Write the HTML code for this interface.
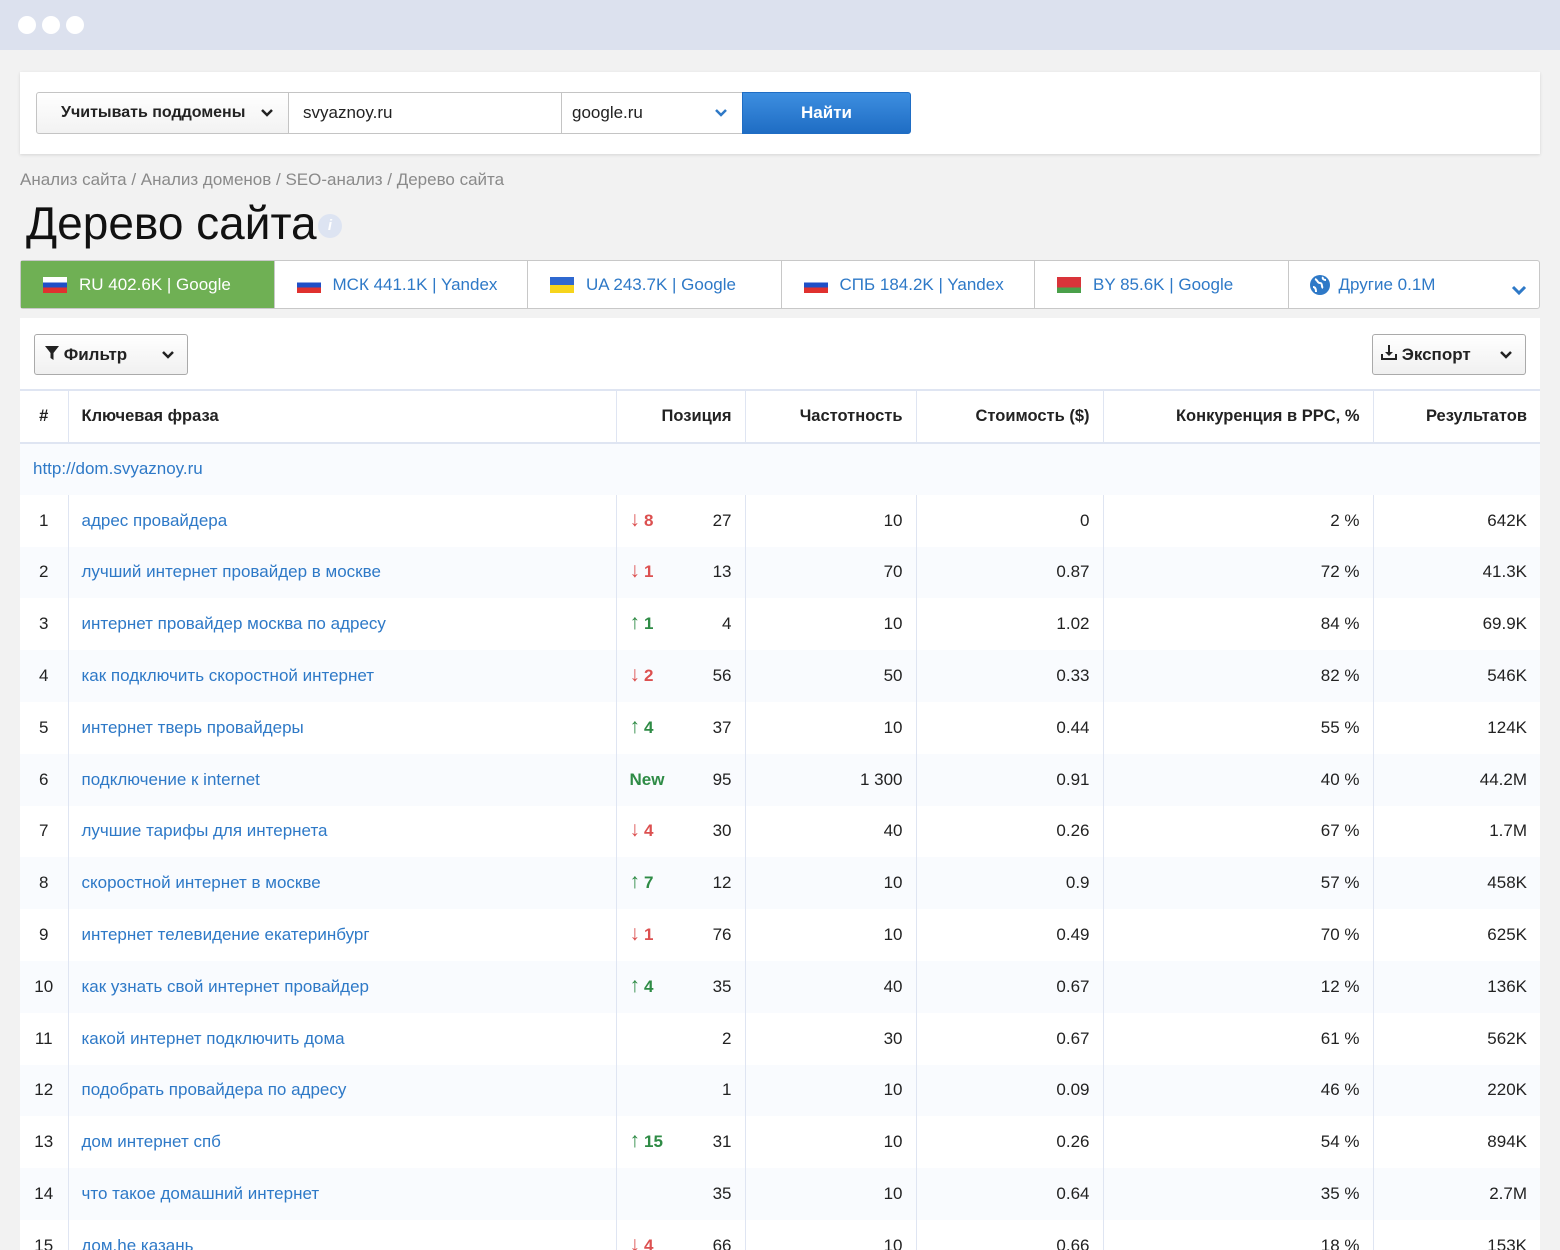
<!DOCTYPE html>
<html style="overflow:hidden"><head><meta charset="utf-8"><style>
*{box-sizing:border-box;margin:0;padding:0}
html,body{width:1560px;height:1250px;overflow:hidden}
body{background:#f2f2f2;font-family:"Liberation Sans",Arial,sans-serif;color:#222;position:relative}
.top{position:absolute;left:0;top:0;width:1560px;height:50px;background:#dce1ee}
.dot{position:absolute;top:16px;width:18px;height:18px;border-radius:50%;background:#fff}
.card1{position:absolute;left:20px;top:72px;width:1520px;height:82px;background:#fff;box-shadow:0 1px 3px rgba(0,0,0,.12)}
.sel{position:absolute;top:20px;height:42px;border:1px solid #c4c4c4;font-size:17px;line-height:40px}
.bc{position:absolute;left:20px;top:170px;font-size:17px;color:#8a8a8a}
h1{position:absolute;left:26px;top:196px;font-size:46px;font-weight:normal;color:#111}
.info{position:absolute;left:318px;top:214px;width:24px;height:24px;border-radius:50%;background:#dde4f2;color:#fff;font-size:15px;text-align:center;line-height:24px;font-style:italic;font-weight:bold}
.tabs{position:absolute;left:20px;top:260px;width:1520px;height:49px;border:1px solid #c8c8c8;border-radius:3px;background:#fff;display:flex}
.tab{width:253.5px;height:47px;border-right:1px solid #c8c8c8;color:#2e79c7;font-size:17px;line-height:47px;padding-left:22px;display:flex;align-items:center}
.tab:last-child{border-right:none;flex:1}
.flag{width:24px;height:16px;margin-right:12px;display:inline-block}
.ru{background:linear-gradient(#fff 33%,#1f4fc7 33%,#1f4fc7 66%,#e0312f 66%)}
.ua{background:linear-gradient(#2f68d0 50%,#f6d41c 50%)}
.by{background:linear-gradient(#d9343a 65%,#4aa04a 65%)}
.card2{position:absolute;left:20px;top:318px;width:1520px;height:932px;background:#fff;overflow:hidden}
.btn{position:absolute;top:16px;height:41px;border:1px solid #aaa;border-radius:3px;background:linear-gradient(#fff,#f0f0f0);font-size:17px;font-weight:bold;line-height:39px}
.chev{position:absolute;top:50%;margin-top:-5px}
table{position:absolute;left:0;top:71px;border-collapse:collapse;font-size:17px;table-layout:fixed;width:1520px}
td,th{padding:0 13px;white-space:nowrap}
th{height:53px;border-top:2px solid #dfe5f2;border-bottom:2px solid #dfe5f2;text-align:right;font-weight:bold;font-size:16.5px}
th+th,td+td{border-left:1px solid #dfe5f2}
td{height:51.8px;text-align:right}
tr.e td{background:#f9fbfe}
td.k,th.k{text-align:left}
td.n,th.n{text-align:center;padding:0}
a{color:#2e79c7;text-decoration:none}
.ch{float:left;font-weight:bold}
.ch b{font-size:21px;font-weight:normal;margin-right:4px;line-height:17px}
.d{color:#dc5050}.u{color:#2e8b45}
</style></head><body>
<div class="top"><div class="dot" style="left:18px"></div><div class="dot" style="left:42px"></div><div class="dot" style="left:66px"></div></div>
<div class="card1">
<div class="sel" style="left:16px;width:253px;background:linear-gradient(#fff,#f2f2f2);font-weight:bold;font-size:16px;padding-left:24px;border-radius:3px 0 0 3px">Учитывать поддомены <svg class="chev" style="right:14px" width="14" height="10" viewBox="0 0 14 10"><path d="M2 2l5 5 5-5" stroke="#222" stroke-width="2.5" fill="none"/></svg></div>
<div class="sel" style="left:268px;width:274px;padding-left:14px">svyaznoy.ru</div>
<div class="sel" style="left:541px;width:182px;padding-left:10px">google.ru<svg class="chev" style="right:14px" width="14" height="10" viewBox="0 0 14 10"><path d="M2 2l5 5 5-5" stroke="#2e79c7" stroke-width="2.5" fill="none"/></svg></div>
<div class="sel" style="left:722px;width:169px;background:linear-gradient(#3d8ee0,#1f6dc4);border-color:#1f6dc4;color:#fff;text-align:center;font-weight:bold;border-radius:0 3px 3px 0">Найти</div>
</div>
<div class="bc">Анализ сайта / Анализ доменов / SEO-анализ / Дерево сайта</div>
<h1>Дерево сайта</h1><div class="info">i</div>
<div class="tabs">
<div class="tab" style="background:#6fb054;color:#fff"><span class="flag ru"></span>RU 402.6K | Google</div>
<div class="tab"><span class="flag ru"></span>МСК 441.1K | Yandex</div>
<div class="tab"><span class="flag ua"></span>UA 243.7K | Google</div>
<div class="tab"><span class="flag ru"></span>СПБ 184.2K | Yandex</div>
<div class="tab"><span class="flag by"></span>BY 85.6K | Google</div>
<div class="tab" style="padding-left:20px;position:relative"><svg width="22" height="22" viewBox="0 0 22 22" style="margin-right:8px"><circle cx="11" cy="11" r="10" fill="#2e79c7"/><path d="M6 5c3 1 2 4 5 4s1 4 3 5M14 3c-1 2 1 3 3 3M4 13c2 0 3 2 3 5" stroke="#fff" stroke-width="2" fill="none"/></svg>Другие 0.1M<svg class="chev" style="right:12px;margin-top:0" width="16" height="11" viewBox="0 0 16 11"><path d="M2 2l6 6 6-6" stroke="#2e79c7" stroke-width="3" fill="none"/></svg></div>
</div>
<div class="card2">
<div class="btn" style="left:14px;width:154px;padding-left:10px"><svg width="14" height="14" viewBox="0 0 14 14"><path d="M0 0h14L8.5 7v7L5.5 12V7z" fill="#222"/></svg> Фильтр<svg class="chev" style="right:12px" width="14" height="10" viewBox="0 0 14 10"><path d="M2 2l5 5 5-5" stroke="#222" stroke-width="2.5" fill="none"/></svg></div>
<div class="btn" style="left:1352px;width:154px;padding-left:8px"><svg width="16" height="15" viewBox="0 0 16 15"><path d="M7 0h2v7h3l-4 4-4-4h3z M0 9h2v4h12V9h2v6H0z" fill="#222"/></svg> Экспорт<svg class="chev" style="right:12px" width="14" height="10" viewBox="0 0 14 10"><path d="M2 2l5 5 5-5" stroke="#222" stroke-width="2.5" fill="none"/></svg></div>
<table>
<colgroup><col style="width:48px"><col style="width:548px"><col style="width:129px"><col style="width:171px"><col style="width:187px"><col style="width:270px"><col style="width:167px"></colgroup>
<tr><th class="n">#</th><th class="k">Ключевая фраза</th><th>Позиция</th><th>Частотность</th><th>Стоимость ($)</th><th>Конкуренция в PPC, %</th><th>Результатов</th></tr>
<tr class="e"><td colspan="7" style="text-align:left;padding-left:13px"><a>http://dom.svyaznoy.ru</a></td></tr>
<tr><td class="n">1</td><td class="k"><a>адрес провайдера</a></td><td><span class="ch d"><b>↓</b>8</span>27</td><td>10</td><td>0</td><td>2 %</td><td>642K</td></tr>
<tr class="e"><td class="n">2</td><td class="k"><a>лучший интернет провайдер в москве</a></td><td><span class="ch d"><b>↓</b>1</span>13</td><td>70</td><td>0.87</td><td>72 %</td><td>41.3K</td></tr>
<tr><td class="n">3</td><td class="k"><a>интернет провайдер москва по адресу</a></td><td><span class="ch u"><b>↑</b>1</span>4</td><td>10</td><td>1.02</td><td>84 %</td><td>69.9K</td></tr>
<tr class="e"><td class="n">4</td><td class="k"><a>как подключить скоростной интернет</a></td><td><span class="ch d"><b>↓</b>2</span>56</td><td>50</td><td>0.33</td><td>82 %</td><td>546K</td></tr>
<tr><td class="n">5</td><td class="k"><a>интернет тверь провайдеры</a></td><td><span class="ch u"><b>↑</b>4</span>37</td><td>10</td><td>0.44</td><td>55 %</td><td>124K</td></tr>
<tr class="e"><td class="n">6</td><td class="k"><a>подключение к internet</a></td><td><span class="ch u">New</span>95</td><td>1 300</td><td>0.91</td><td>40 %</td><td>44.2M</td></tr>
<tr><td class="n">7</td><td class="k"><a>лучшие тарифы для интернета</a></td><td><span class="ch d"><b>↓</b>4</span>30</td><td>40</td><td>0.26</td><td>67 %</td><td>1.7M</td></tr>
<tr class="e"><td class="n">8</td><td class="k"><a>скоростной интернет в москве</a></td><td><span class="ch u"><b>↑</b>7</span>12</td><td>10</td><td>0.9</td><td>57 %</td><td>458K</td></tr>
<tr><td class="n">9</td><td class="k"><a>интернет телевидение екатеринбург</a></td><td><span class="ch d"><b>↓</b>1</span>76</td><td>10</td><td>0.49</td><td>70 %</td><td>625K</td></tr>
<tr class="e"><td class="n">10</td><td class="k"><a>как узнать свой интернет провайдер</a></td><td><span class="ch u"><b>↑</b>4</span>35</td><td>40</td><td>0.67</td><td>12 %</td><td>136K</td></tr>
<tr><td class="n">11</td><td class="k"><a>какой интернет подключить дома</a></td><td>2</td><td>30</td><td>0.67</td><td>61 %</td><td>562K</td></tr>
<tr class="e"><td class="n">12</td><td class="k"><a>подобрать провайдера по адресу</a></td><td>1</td><td>10</td><td>0.09</td><td>46 %</td><td>220K</td></tr>
<tr><td class="n">13</td><td class="k"><a>дом интернет спб</a></td><td><span class="ch u"><b>↑</b>15</span>31</td><td>10</td><td>0.26</td><td>54 %</td><td>894K</td></tr>
<tr class="e"><td class="n">14</td><td class="k"><a>что такое домашний интернет</a></td><td>35</td><td>10</td><td>0.64</td><td>35 %</td><td>2.7M</td></tr>
<tr><td class="n">15</td><td class="k"><a>дом.he казань</a></td><td><span class="ch d"><b>↓</b>4</span>66</td><td>10</td><td>0.66</td><td>18 %</td><td>153K</td></tr>
</table>
</div>
</body></html>
